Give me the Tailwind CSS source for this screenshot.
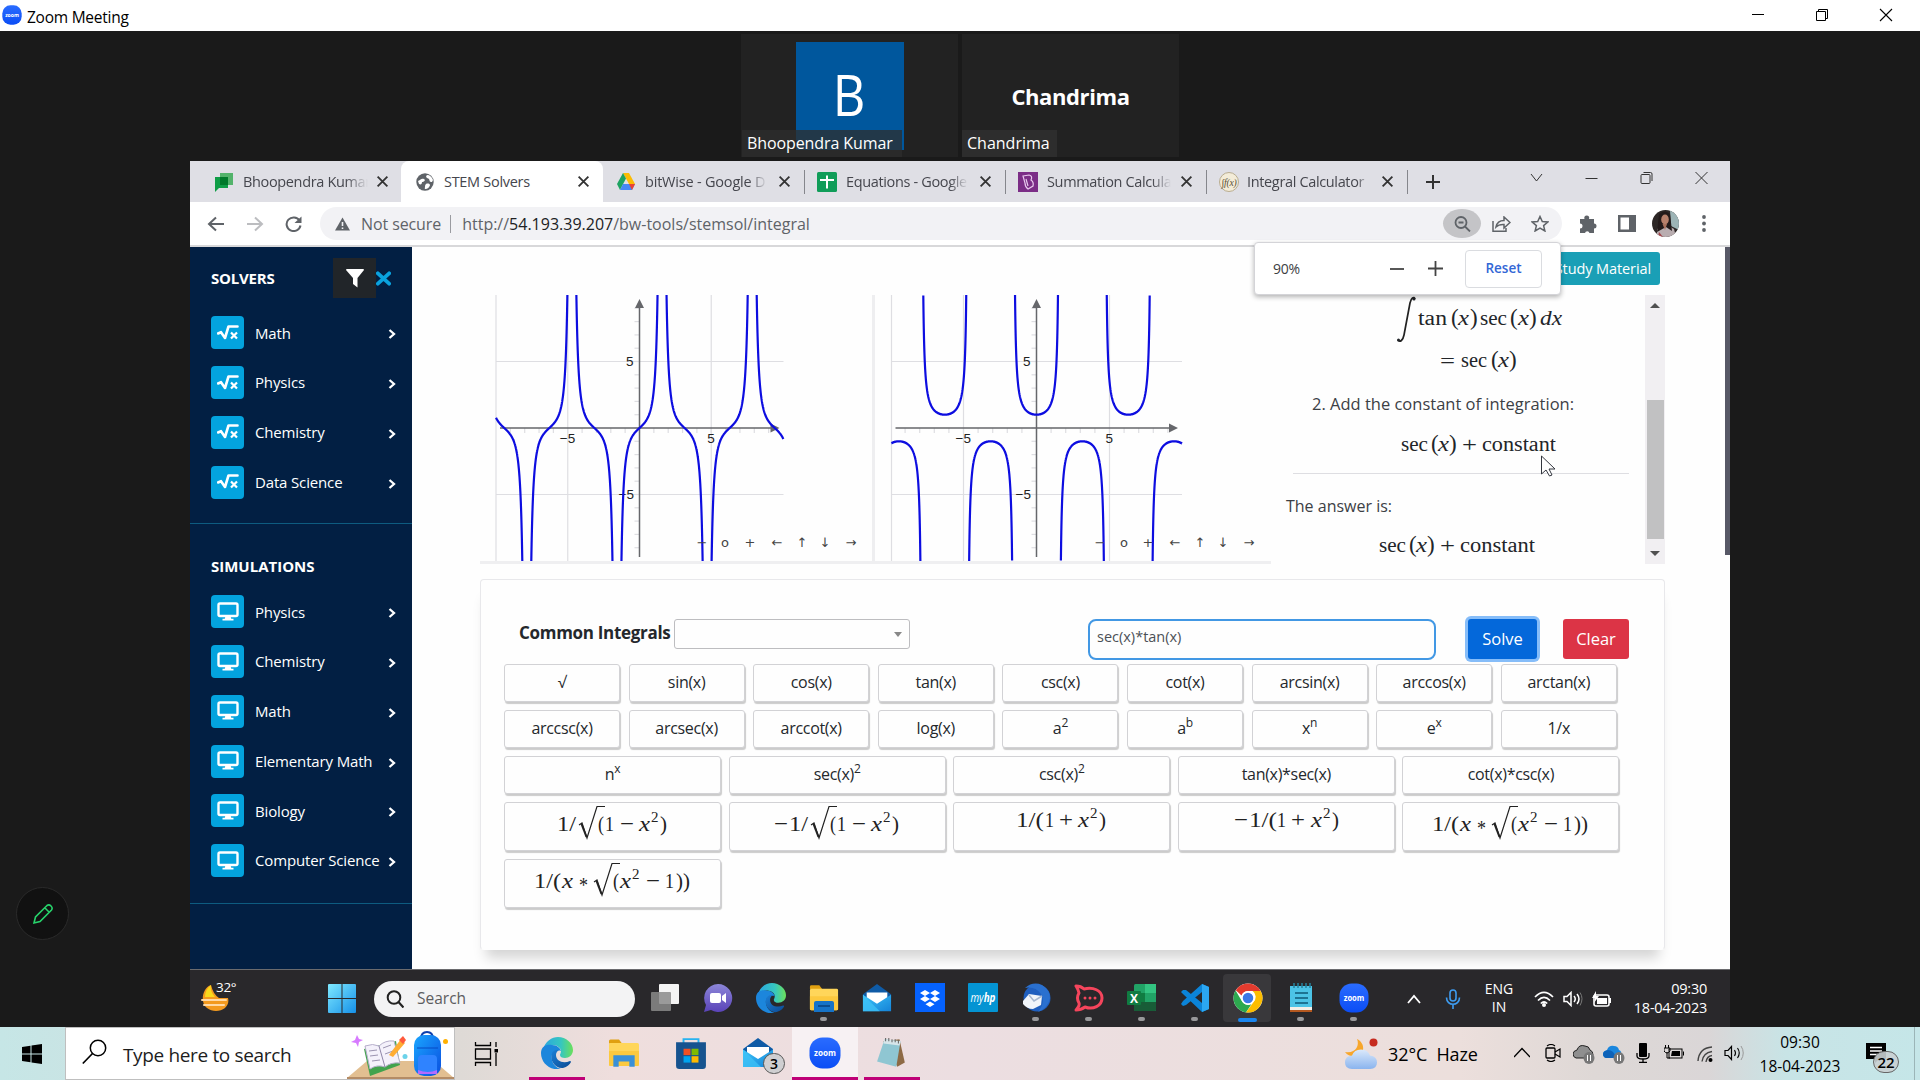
<!DOCTYPE html>
<html lang="en">
<head>
<meta charset="utf-8">
<title>Zoom Meeting</title>
<script src="https://cdn.jsdelivr.net/npm/@tailwindcss/browser@4"></script>
</head>
<body class="w-[1920px] h-[1080px] overflow-hidden bg-[#1a1a1a] flex flex-col font-['Open_Sans','Noto_Sans',sans-serif]">

<svg width="0" height="0" class="absolute">
  <defs>
    <linearGradient id="gz" x1="0" y1="0" x2="0" y2="1"><stop offset="0" stop-color="#2a6cff"/><stop offset="1" stop-color="#0b4df5"/></linearGradient>
    <linearGradient id="ge" x1="0" y1="0" x2="1" y2="0"><stop offset="0" stop-color="#2aa6e0"/><stop offset=".6" stop-color="#36c6c0"/><stop offset="1" stop-color="#6be05a"/></linearGradient>
    <linearGradient id="ge2" x1="0" y1="0" x2="1" y2="1"><stop offset="0" stop-color="#1b7fd6"/><stop offset="1" stop-color="#0c4a93"/></linearGradient>
    <linearGradient id="gm" x1="0" y1="0" x2="1" y2="1"><stop offset="0" stop-color="#3cc4f8"/><stop offset="1" stop-color="#1583d8"/></linearGradient>
    <linearGradient id="gw" x1="0" y1="0" x2="1" y2="1"><stop offset="0" stop-color="#7fe9ff"/><stop offset="1" stop-color="#1590e8"/></linearGradient>
    <linearGradient id="gc" x1="0" y1="0" x2="0" y2="1"><stop offset="0" stop-color="#dbe9fb"/><stop offset="1" stop-color="#8ab4ee"/></linearGradient>
    <linearGradient id="gb" x1="0" y1="0" x2="1" y2="1"><stop offset="0" stop-color="#1aa6ff"/><stop offset="1" stop-color="#0a4fe0"/></linearGradient>
    <linearGradient id="gch" x1="0" y1="0" x2="0" y2="1"><stop offset="0" stop-color="#8c86d8"/><stop offset="1" stop-color="#5a43b8"/></linearGradient>
  </defs>
  <symbol id="zoom" viewBox="0 0 32 32"><rect x=".5" y=".5" width="31" height="31" rx="13" fill="url(#gz)"/><text x="16" y="19" font-size="9.5" font-weight="700" text-anchor="middle" fill="#fff" textLength="22" lengthAdjust="spacingAndGlyphs" font-family="Open Sans">zoom</text></symbol>
  <symbol id="edge" viewBox="0 0 32 32"><path d="M2 13C4 4 11 0 17 0c8 0 15 6 15 13 0 5-4 8-8 8-3 0-5-1-5-3 0-1 1-2 1-4 0-3-4-6-8-6-5 0-9 2-10 5z" fill="url(#ge)"/><path d="M0 16C0 9 6 7 11 8c5 0 8 3 9 6-6-2-11 3-9 9 1 5 5 8 9 9C9 34 0 26 0 16z" fill="#1c86dc"/><path d="M11 16c-3 8 4 16 11 15 4-1 7-4 8-6 0-1-1-1-1-1-7 3-14 0-14-6 0-2 1-4 3-5-3-1-6 1-7 3z" fill="url(#ge2)"/></symbol>
  <symbol id="folder" viewBox="0 0 32 32"><path d="M1 4q0-1.500 1.500-1.500H11l3 4H1z" fill="#e0a010"/><rect x="1" y="6" width="30" height="23" rx="1.500" fill="#ffd65a"/><path d="M1 14h30v14q0 1-1.500 1h-27Q1 29 1 28z" fill="#fcc93f"/></symbol>
  <symbol id="mail" viewBox="0 0 32 32"><path d="M1 12 16 1l15 11v4H1z" fill="#0f5ba6"/><path d="M5 10h22v8l-11 7L5 18z" fill="#fff"/><path d="M1 12.500 16 22l15-9.500V30H1z" fill="url(#gm)"/><path d="M1 12.500 19 30H1z" fill="#3fc3f7" opacity=".75"/></symbol>
  <symbol id="x" viewBox="0 0 12 12"><path d="M1.500 1.500l9 9M10.500 1.500l-9 9" stroke="currentColor" fill="none" stroke-width="1.700"/></symbol>
  <symbol id="root" viewBox="0 0 22 18"><path d="M1 9.500 4 8.200 8 14 11.500 2.500H20.500" fill="none" stroke="#fff" stroke-width="2.600" stroke-linejoin="round" stroke-linecap="round"/><path d="M14 8.500l6 6M20 8.500l-6 6" stroke="#fff" stroke-width="2.200"/></symbol>
  <symbol id="monitor" viewBox="0 0 22 20"><rect x="1.500" y="1.500" width="19" height="12.500" rx="1.500" fill="none" stroke="#fff" stroke-width="2.400"/><path d="M8.500 14h5l.8 3H7.700zM5.500 16.700h11v1.800h-11z" fill="#fff"/></symbol>
  <symbol id="chev" viewBox="0 0 8 10"><path d="M1.500 1 6 5 1.500 9" fill="none" stroke="#fff" stroke-width="2.300"/></symbol>
</svg>

<!-- meeting window title bar -->
<header class="h-[31px] shrink-0 bg-white flex items-center">
  <svg class="w-5 h-5 ml-0.5 mb-0.5 shrink-0"><use href="#zoom"/></svg>
  <span class="ml-[5px] mt-0.5 text-[15.5px] text-black tracking-[-0.25px] leading-5">Zoom Meeting</span>
  <div class="ml-auto flex items-center text-black mb-px mr-px">
    <svg class="w-16" height="14" viewBox="0 0 64 14"><path d="M25 6.500h12" stroke="#000"/></svg>
    <svg class="w-16" height="14" viewBox="0 0 64 14"><path d="M25.500 3.500h9v9h-9zM27.500 3.500v-2h9v9h-2" stroke="#000" fill="none"/></svg>
    <svg class="w-16" height="14" viewBox="0 0 64 14"><path d="M25 1l12 12M37 1 25 13" stroke="#000" stroke-width="1.100"/></svg>
  </div>
</header>

<!-- participants -->
<section class="h-[130px] shrink-0 flex justify-center gap-1 pt-[3px] pb-1">
  <div class="w-[217px] h-[123px] bg-[#222] relative flex justify-center items-start">
    <div class="w-[108px] h-[108px] mt-2 bg-[#00579d] text-white text-[56px] font-medium flex items-center justify-center leading-none pb-1"><span class="scale-x-90">B</span></div>
    <div class="absolute left-px bottom-0 w-[160px] h-[27px] bg-[#2d2d2d]/75 text-white text-[16px] leading-[27px] pl-[5px] tracking-[-0.100px] whitespace-nowrap">Bhoopendra Kumar</div>
  </div>
  <div class="w-[217px] h-[123px] bg-[#222] relative flex justify-center items-center text-white">
    <span class="text-[22px] font-bold tracking-[-0.4px] leading-none">Chandrima</span>
    <div class="absolute left-0 bottom-0 w-[95px] h-[27px] bg-[#2d2d2d] text-[16px] leading-[27px] pl-[5px]">Chandrima</div>
  </div>
</section>

<!-- shared screen -->
<main class="w-[1540px] h-[866px] ml-[190px] shrink-0 flex flex-col bg-white relative">
  <!-- tab strip -->
  <div class="h-[41px] shrink-0 bg-[#dfdfe5] flex items-center text-[#45464d] text-[14px] tracking-[-0.250px]">
    <div class="w-[211px] h-full flex items-center pl-[25px] pr-3">
      <svg class="w-[18px] h-5 shrink-0" viewBox="0 0 18 20"><path d="M5 1h13v12H5z" fill="#53b36b"/><path d="M0 5h13v11H4l-4 4z" fill="#0f9d46"/><path d="M5 5h8v8H5z" fill="#00792a"/></svg>
      <span class="ml-[10px] w-[125px] text-[14.500px] tracking-[-0.350px] whitespace-nowrap [mask-image:linear-gradient(90deg,#000_82%,transparent)]">Bhoopendra Kumar</span>
      <svg class="w-[13px] h-[13px] ml-auto text-[#333]"><use href="#x"/></svg>
    </div>
    <div class="w-[202px] h-full flex items-center pl-[15px] pr-[13px] bg-white rounded-t-lg">
      <svg class="w-[18px] h-[18px] shrink-0" viewBox="0 0 18 18"><circle cx="9" cy="9" r="8.700" fill="#5f6368"/><path d="M2 8c3-1 3-3 6-2 2 1 0 3-2 3 0 2-1 3-3 2zM11 2c-2 2 0 3 2 4 1 2 0 3 3 3l1-2c-1-3-3-5-6-5zM10 11c2-1 4 0 4 1s-2 4-4 4-1-1-1-2 0-2 1-3z" fill="#fff"/></svg>
      <span class="ml-[10px] text-[14.500px] tracking-[-0.300px]">STEM Solvers</span>
      <svg class="w-[13px] h-[13px] ml-auto text-[#333]"><use href="#x"/></svg>
    </div>
    <div class="w-[201px] h-full flex items-center pl-[14px] pr-[13px]">
      <svg class="w-[18px] h-[17px] shrink-0" viewBox="0 0 18 17"><path d="M6 0h6l6 11h-6z" fill="#fbbc04"/><path d="M6 0 0 11l3 6L9 5.500z" fill="#1ea362"/><path d="M3 17h12l3-6H6z" fill="#4688f4"/><path d="M12 11h6l-3 6z" fill="#ea4335"/></svg>
      <span class="ml-[10px] w-[122px] text-[14.500px] tracking-[-0.200px] whitespace-nowrap overflow-hidden [mask-image:linear-gradient(90deg,#000_85%,transparent)]">bitWise - Google D</span>
      <svg class="w-[13px] h-[13px] ml-auto text-[#333]"><use href="#x"/></svg>
    </div>
    <div class="w-[201px] h-6 flex items-center pl-[12px] pr-[13px] border-l border-[#85868c]">
      <svg class="w-5 h-5 shrink-0" viewBox="0 0 20 20"><rect width="20" height="20" rx="1.500" fill="#109d59"/><path d="M10 3.500v13M3 8h14" stroke="#fff" stroke-width="2"/></svg>
      <span class="ml-[9px] w-[122px] text-[14.500px] tracking-[-0.350px] whitespace-nowrap [mask-image:linear-gradient(90deg,#000_85%,transparent)]">Equations - Google</span>
      <svg class="w-[13px] h-[13px] ml-auto text-[#333]"><use href="#x"/></svg>
    </div>
    <div class="w-[201px] h-6 flex items-center pl-[12px] pr-[13px] border-l border-[#85868c]">
      <svg class="w-5 h-5 shrink-0" viewBox="0 0 20 20"><rect width="20" height="20" fill="#7b2d86"/><path d="M5 4l6-1q4 1 2 5 3 2 2 6l-5 3q-3-2-3-6z M8 7l2 7" fill="none" stroke="#e9c9ee" stroke-width="1.200"/></svg>
      <span class="ml-[9px] w-[124px] text-[14.500px] tracking-[-0.350px] whitespace-nowrap [mask-image:linear-gradient(90deg,#000_85%,transparent)]">Summation Calcula</span>
      <svg class="w-[13px] h-[13px] ml-auto text-[#333]"><use href="#x"/></svg>
    </div>
    <div class="w-[202px] h-6 flex items-center pl-[12px] pr-[13px] border-x border-[#85868c]">
      <svg class="w-5 h-5 shrink-0" viewBox="0 0 20 20"><circle cx="10" cy="10" r="9.500" fill="#f3ecd8" stroke="#b9ad90"/><text x="10" y="13.500" font-size="10" font-style="italic" text-anchor="middle" fill="#5a4f35" textLength="15" lengthAdjust="spacingAndGlyphs" font-family="Liberation Serif">∫f(x)</text></svg>
      <span class="ml-[8px] w-[122px] text-[14.500px] tracking-[-0.350px] whitespace-nowrap [mask-image:linear-gradient(90deg,#000_90%,transparent)]">Integral Calculator</span>
      <svg class="w-[13px] h-[13px] ml-auto text-[#333]"><use href="#x"/></svg>
    </div>
    <svg class="w-4 h-4 ml-[17px] shrink-0" viewBox="0 0 16 16"><path d="M8 1v14M1 8h14" stroke="#333" stroke-width="2"/></svg>
    <div class="ml-auto mr-px flex items-center pb-[7px]">
      <svg class="w-[55px] h-3" viewBox="0 0 55 12"><path d="M22 2l5.500 7L33 2" stroke="#333" fill="none"/></svg>
      <svg class="w-[55px] h-3" viewBox="0 0 55 12"><path d="M21.500 6.500h12" stroke="#333"/></svg>
      <svg class="w-[55px] h-3" viewBox="0 0 55 12"><rect x="22" y="2.500" width="9" height="9" rx="1" stroke="#333" fill="none"/><path d="M24.500.5h7q1.500 0 1.500 1.500v7" stroke="#333" fill="none"/></svg>
      <svg class="w-[55px] h-3" viewBox="0 0 55 12"><path d="M21.500 0l12 12M33.500 0l-12 12" stroke="#333"/></svg>
    </div>
  </div>
  <!-- toolbar -->
  <div class="h-[45px] shrink-0 border-b-2 border-[#d8d8da] flex items-center pl-[7px] pr-[8px]">
    <svg class="w-[39px] h-4" viewBox="0 0 39 16"><path d="M27 8H12.500M19 1.500 12 8l7 6.500" stroke="#5f6368" stroke-width="2" fill="none"/></svg>
    <svg class="w-[38px] h-4" viewBox="0 0 38 16"><path d="M11 8h14.500M19 1.500 26 8l-7 6.500" stroke="#bcbdc0" stroke-width="2" fill="none"/></svg>
    <svg class="w-[40px] h-4" viewBox="0 0 40 16"><path d="M25.500 4.500A7 6.800 0 1 0 26.500 9.500" stroke="#5f6368" stroke-width="2" fill="none"/><path d="M27.500 .5v6.500h-7z" fill="#5f6368"/></svg>
    <div class="ml-[6px] w-[1242px] h-[33px] rounded-full bg-[#f2f2f5] flex items-center text-[#5f6368] text-[16px] shrink-0">
      <svg class="w-[15px] h-[14px] ml-[15px]" viewBox="0 0 15 14"><path d="M7.500.5 15 13.500H0z" fill="#5f6368"/><path d="M7.500 5v4M7.500 10.500v1.500" stroke="#f2f2f5" stroke-width="1.600"/></svg>
      <span class="ml-[11px] tracking-[-0.100px]">Not secure</span>
      <span class="ml-[9px] w-px h-[18px] bg-[#9a9ba0]"></span>
      <span class="ml-[11px]">http://<span class="text-[#202124]">54.193.39.207</span>/bw-tools/stemsol/integral</span>
      <div class="ml-auto mr-[5px] flex items-center">
        <div class="w-[38px] h-[29px] rounded-[50%] bg-[#c4c4c7] flex items-center justify-center"><svg class="w-[17px] h-4" viewBox="0 0 17 16"><circle cx="7" cy="6.500" r="5.500" fill="none" stroke="#5f6368" stroke-width="1.800"/><path d="M4.500 6.500h5M11 10.500l5 5" stroke="#5f6368" stroke-width="1.800"/></svg></div>
        <svg class="w-[19px] h-4 ml-[11px]" viewBox="0 0 19 16"><path d="M1 5v10.300h13V12M4 11C5 6 8 4.500 12 4.500V1l6 5.500-6 5.500V8.500C8 8.300 6 9 4 11z" fill="none" stroke="#5f6368" stroke-width="1.500"/></svg>
        <svg class="w-[18px] h-[17px] ml-[20px] mr-2" viewBox="0 0 18 17"><path d="M9 1.500l2.300 5 5.500.5-4.200 3.600 1.300 5.400L9 13.200 4.100 16l1.300-5.400L1.200 7l5.500-.5z" fill="none" stroke="#5f6368" stroke-width="1.500"/></svg>
      </div>
    </div>
    <svg class="w-[18px] h-[18px] ml-[17px]" viewBox="0 0 18 18"><path d="M1 4h4.500a2.500 2.500 0 1 1 4.500 0h5v4.500a2.500 2.500 0 1 1 0 5V18h-4.500a2.300 2.300 0 0 0-4.500 0H1v-4.500a2.500 2.500 0 0 0 0-5z" fill="#5f6368"/></svg>
    <svg class="w-[18px] h-[17px] ml-[21px]" viewBox="0 0 18 17"><path d="M0 0h18v17H0zM2.500 2.500v12H11v-12z" fill="#5f6368" fill-rule="evenodd"/></svg>
    <svg class="w-[27px] h-[27px] ml-[16px]" viewBox="0 0 27 27"><defs><clipPath id="av"><circle cx="13.500" cy="13.500" r="13.500"/></clipPath></defs><g clip-path="url(#av)"><path d="M0 0h27v27H0z" fill="#2d2726"/><path d="M18 0h9v20l-8-4z" fill="#9db4b6"/><path d="M5 27V19l6-3h6l5 3 2 8z" fill="#b9adb0"/><path d="M7 4q6-5 11 0l2 17-6-4-9 5z" fill="#231a1a"/><ellipse cx="13" cy="9.500" rx="3.800" ry="5" fill="#b7806b"/><path d="M10.500 14h4.500l-2 6z" fill="#a8705c"/><path d="M7 22l4 5H6z" fill="#a3474d"/></g></svg>
    <svg class="w-1 h-[17px] ml-[23px]" viewBox="0 0 4 17"><circle cx="2" cy="2" r="1.900" fill="#5f6368"/><circle cx="2" cy="8.500" r="1.900" fill="#5f6368"/><circle cx="2" cy="15" r="1.900" fill="#5f6368"/></svg>
  </div>

  <!-- zoom level bubble -->
  <div class="absolute z-10 left-[1064px] top-[81px] w-[307px] h-[53px] bg-white rounded border border-[#d4d4d8] shadow-[0_2px_5px_rgba(0,0,0,0.3)] flex items-center pl-[18px] text-[#3c4043]">
    <span class="text-[14px] tracking-[-0.300px]">90%</span>
    <svg class="w-[14px] h-4 ml-auto" viewBox="0 0 14 16"><path d="M0 8h14" stroke="#444" stroke-width="1.800"/></svg>
    <svg class="w-[15px] h-[15px] ml-6" viewBox="0 0 15 15"><path d="M0 7.500h15M7.500 0v15" stroke="#444" stroke-width="1.800"/></svg>
    <div class="ml-[22px] mr-[18px] w-[77px] h-[38px] border border-[#dadce0] rounded flex items-center justify-center text-[#3367d6] font-semibold text-[13.500px]">Reset</div>
  </div>

  <!-- page -->
  <div class="h-[722px] shrink-0 flex overflow-hidden bg-[#fefefe]">
    <aside class="w-[222px] h-full bg-[#021f43] text-white flex flex-col shrink-0">
      <div class="h-[277px] border-b border-[#0d5b80] pl-[21px]">
        <div class="flex items-center h-[39px] pt-[12px] box-content -mt-3 pb-0">
        </div>
        <div class="flex items-center h-10 -mt-[28px]">
          <span class="text-[15px] font-bold w-[122px] tracking-[-0.200px]">SOLVERS</span>
          <div class="w-[43px] h-10 bg-[#212529] flex items-center justify-center"><svg class="w-[18px] h-[19px]" viewBox="0 0 18 19"><path d="M0 1q0-1 1-1h16q1 0 1 1l-6.500 8v9.500L7 15V9z" fill="#fff"/></svg></div>
          <svg class="w-[15px] h-[15px]" viewBox="0 0 16 15"><path d="M2 2l12 11M14 2 2 13" stroke="#0aa2de" stroke-width="4" stroke-linecap="round"/></svg>
        </div>
        <nav id="solvers" class="mt-[18px] flex flex-col"></nav>
      </div>
      <div class="h-[380px] border-b border-[#0d5b80] pl-[21px]">
        <h2 class="text-[15px] font-bold mt-[32px] h-[20px] leading-5">SIMULATIONS</h2>
        <nav id="sims" class="mt-[19px] flex flex-col"></nav>
      </div>
    </aside>

    <div class="w-[1313px] shrink-0 flex flex-col">
      <div class="h-12 shrink-0 flex justify-end items-start pt-[5px] pr-[65px]">
        <div class="w-[122px] h-[33px] bg-[#1a9fb6] rounded-[3px] text-white text-[14.500px] leading-[33px] text-right pr-[9px] tracking-[-0.1px] whitespace-nowrap">Study Material</div>
      </div>
      <div class="flex h-[269px] shrink-0 pl-[68px]">
        <div class="w-[791px] h-[269px] border-b-[3px] border-[#efeff1] flex">
          <svg id="g1" class="w-[392px] h-[266px] shrink-0" viewBox="0 0 392 266"></svg>
          <div class="w-[3px] h-full bg-[#eeeef0]"></div>
          <svg id="g2" class="w-[395px] h-[266px] shrink-0" viewBox="0 0 395 266"></svg>
        </div>
        <!-- worked solution -->
        <svg class="w-[374px] h-[269px] shrink-0" viewBox="1271 295 374 269" fill="#222529" font-family="Liberation Serif,serif" font-size="20">
          <path d="M1398 340c2 3 5 0 6-5l6-32c1-5 4-7 5-4" fill="none" stroke="#222" stroke-width="1.700"/><circle cx="1398.500" cy="340" r="1.500"/><circle cx="1414" cy="299" r="1.500"/>
          <text x="1418" y="325" textLength="29" lengthAdjust="spacingAndGlyphs">tan</text><text x="1451" y="325" font-size="23">(</text><text x="1458" y="325" font-style="italic" textLength="11" lengthAdjust="spacingAndGlyphs">x</text><text x="1470" y="325" font-size="23">)</text>
          <text x="1480" y="325" textLength="27" lengthAdjust="spacingAndGlyphs">sec</text><text x="1510" y="325" font-size="23">(</text><text x="1518" y="325" font-style="italic" textLength="11" lengthAdjust="spacingAndGlyphs">x</text><text x="1529" y="325" font-size="23">)</text><text x="1540" y="325" font-style="italic" textLength="22" lengthAdjust="spacingAndGlyphs">dx</text>
          <text x="1440" y="368" textLength="15" lengthAdjust="spacingAndGlyphs">=</text><text x="1461" y="367" textLength="26" lengthAdjust="spacingAndGlyphs">sec</text><text x="1491" y="367" font-size="23">(</text><text x="1498" y="367" font-style="italic" textLength="11" lengthAdjust="spacingAndGlyphs">x</text><text x="1509" y="367" font-size="23">)</text>
          <text x="1312" y="409.500" font-family="Open Sans,sans-serif" font-size="16.500" fill="#3c4045" textLength="262" lengthAdjust="spacingAndGlyphs">2. Add the constant of integration:</text>
          <text x="1401" y="450.500" textLength="27" lengthAdjust="spacingAndGlyphs">sec</text><text x="1431" y="450.500" font-size="23">(</text><text x="1438" y="450.500" font-style="italic" textLength="11" lengthAdjust="spacingAndGlyphs">x</text><text x="1449" y="450.500" font-size="23">)</text><text x="1462" y="451.500" textLength="15" lengthAdjust="spacingAndGlyphs">+</text><text x="1482" y="450.500" textLength="74" lengthAdjust="spacingAndGlyphs">constant</text>
          <path d="M1293 473.500h336" stroke="#dedee2"/>
          <text x="1286" y="511.500" font-family="Open Sans,sans-serif" font-size="16.500" fill="#3c4045" textLength="106" lengthAdjust="spacingAndGlyphs">The answer is:</text>
          <text x="1379" y="551.500" textLength="27" lengthAdjust="spacingAndGlyphs">sec</text><text x="1409" y="551.500" font-size="23">(</text><text x="1416" y="551.500" font-style="italic" textLength="11" lengthAdjust="spacingAndGlyphs">x</text><text x="1427" y="551.500" font-size="23">)</text><text x="1440" y="552.500" textLength="15" lengthAdjust="spacingAndGlyphs">+</text><text x="1460" y="551.500" textLength="75" lengthAdjust="spacingAndGlyphs">constant</text>
          <path d="M1541.500 456v18l4.500-4 3.500 6 2.500-1-3-6h6z" fill="#fff" stroke="#33363f" stroke-width="1"/>
        </svg>
        <div class="w-5 h-full bg-[#f1eff2] flex flex-col items-center">
          <svg class="w-[10px] h-[5px] mt-[8px]" viewBox="0 0 10 5"><path d="M0 5 5 0l5 5z" fill="#505050"/></svg>
          <div class="w-[17px] h-[139px] mt-[92px] bg-[#c1c1c2]"></div>
          <svg class="w-[10px] h-[5px] mt-[12px]" viewBox="0 0 10 5"><path d="M0 0l5 5 5-5z" fill="#505050"/></svg>
        </div>
      </div>
      <!-- calculator card -->
      <div class="ml-[68px] mt-[15px] w-[1185px] h-[371px] shrink-0 border border-[#e8e8eb] border-b-transparent rounded shadow-[0_14px_12px_-6px_rgba(0,0,0,0.17)] bg-[#fefefe] pl-[23px] pt-[39px] flex flex-col text-[#24282c]">
        <div class="flex h-[45px] items-start">
          <span class="ml-[15px] w-[155px] text-[17px] font-bold leading-7 whitespace-nowrap tracking-[-0.300px]">Common Integrals</span>
          <div class="w-[236px] h-[30px] border border-[#bdbdc0] rounded-[3px] flex items-center justify-end pr-[7px]"><svg class="w-2 h-[5px]" viewBox="0 0 8 5"><path d="M0 0h8L4 5z" fill="#888"/></svg></div>
          <div class="ml-[178px] w-[348px] h-[41px] border-2 border-[#4298e4] rounded-lg text-[14.500px] text-[#4b5056] pl-[7px] leading-[31px]">sec(x)*tan(x)</div>
          <div class="ml-[32px] w-[69px] h-10 bg-[#0468da] rounded-[3px] ring-[3px] ring-[#86bdf9] text-white text-[16.500px] flex items-center justify-center pt-px">Solve</div>
          <div class="ml-[26px] w-[66px] h-10 bg-[#dc3446] rounded-[3px] text-white text-[16.500px] flex items-center justify-center pt-px">Clear</div>
        </div>
        <div id="keys9" class="grid grid-cols-[repeat(9,116px)] gap-x-[8.600px] gap-y-2 auto-rows-[38px]"></div>
        <div id="keys5" class="mt-2 grid grid-cols-[repeat(5,217px)] gap-x-[7.600px] gap-y-2 grid-rows-[38px_49px_49px]"></div>
      </div>
    </div>
    <div class="w-[5px] h-[308px] bg-[#575866]"></div>
  </div>

  <!-- shared screen taskbar -->
  <div class="h-[58px] shrink-0 bg-[#29282b] border-t border-[#6b6b6e] flex items-center">
    <div class="w-[138px] shrink-0 pl-[11px] relative">
      <svg class="w-9 h-8" viewBox="0 0 36 32"><path d="M10 2C1 5-1 20 6 25c5 4 13 4 18 0 3-3 4-6 3-10H18q-6-4-8-13z" fill="#f39a1f"/><path d="M10 2C6 5 4 9 4 14h10c-3-4-5-7-4-12z" fill="#f8d91c"/><path d="M1 17h24M3 22h20" stroke="#ffd9a5" stroke-width="2" stroke-linecap="round"/></svg>
      <span class="absolute left-[26px] top-[-4px] text-[13.500px] text-white leading-4 tracking-tight">32°</span>
    </div>
    <svg class="w-[28px] h-[29px] shrink-0" viewBox="0 0 28 29"><path d="M0 1q0-1 1-1h12.500v14H0zM14.500 0H27q1 0 1 1v13H14.500zM0 15h13.500v14H1q-1 0-1-1zM14.500 15H28v13q0 1-1 1H14.500z" fill="url(#gw)"/></svg>
    <div class="ml-[18px] w-[261px] h-9 rounded-full bg-[#f3f3f4] shrink-0 flex items-center text-[15.500px] text-[#5d5d60]">
      <svg class="w-[18px] h-[18px] ml-[12px]" viewBox="0 0 18 18"><circle cx="8" cy="7.500" r="6.300" fill="none" stroke="#222" stroke-width="2"/><path d="M12.500 12l5 5.500" stroke="#222" stroke-width="2.200"/></svg>
      <span class="ml-[13px]">Search</span>
    </div>
    <div id="dock" class="flex ml-[3px] h-full"></div>
    <div class="ml-auto mr-[23px] flex items-center text-white">
      <svg class="w-[14px] h-3" viewBox="0 0 14 12"><path d="M1 10l6-7 6 7" stroke="#fff" stroke-width="1.800" fill="none"/></svg>
      <svg class="w-4 h-5 ml-[24px]" viewBox="0 0 16 20"><rect x="5" y="1" width="6" height="11" rx="3" fill="none" stroke="#3e9cf0" stroke-width="1.600"/><path d="M1.500 8.500c0 9 13 9 13 0M8 15.500V20" stroke="#3e9cf0" stroke-width="1.600" fill="none"/></svg>
      <div class="w-[40px] ml-[18px] text-center text-[14px] leading-[18px] pb-px">ENG<br>IN</div>
      <svg class="w-5 h-4 ml-[15px]" viewBox="0 0 20 16"><path d="M1 6q9-9 18 0M4 9.500q6-6 12 0M6.800 12.500q3.200-3 6.400 0" stroke="#fff" stroke-width="1.700" fill="none"/><circle cx="10" cy="14" r="2" fill="#fff"/></svg>
      <svg class="w-5 h-4 ml-[9px]" viewBox="0 0 20 16"><path d="M1 5.500h3l4-4v13l-4-4H1z" fill="none" stroke="#fff" stroke-width="1.500"/><path d="M11 5q2.500 3 0 6M14 3q4 5 0 10" stroke="#fff" stroke-width="1.500" fill="none"/><path d="M17 1.500q4 6 0 13" stroke="#777" fill="none"/></svg>
      <svg class="w-5 h-4 ml-[9px]" viewBox="0 0 20 16"><rect x="2" y="4" width="15" height="11" rx="2" fill="none" stroke="#fff" stroke-width="1.600"/><rect x="5" y="7" width="10" height="6" fill="#fff"/><path d="M18 7v5" stroke="#fff" stroke-width="2"/><path d="M4 0 0 7h3l-1 5 5-7H4z" fill="#fff"/></svg>
      <div class="ml-auto w-[95px] text-right text-[14.500px] leading-[19px] tracking-[-0.250px] pb-px">09:30<br>18-04-2023</div>
    </div>
  </div>
</main>

<!-- annotation button -->
<div class="absolute left-[16px] top-[887px] w-[53px] h-[53px] rounded-full bg-[#111] border border-[#2a2a2a] flex items-center justify-center">
  <svg class="w-[22px] h-[22px]" viewBox="0 0 22 22"><path d="M2 20l1.500-6L15 2.500q2-1.500 4 .5t.500 4L8 18.500z M13 5l4.500 4.500" fill="none" stroke="#27d36b" stroke-width="1.600"/></svg>
</div>

<!-- host taskbar -->
<footer class="h-[53px] shrink-0 flex items-center bg-[linear-gradient(90deg,#c6e6e6_0%,#c9e4e4_4%,#dedad6_24%,#efdedd_32%,#ecdee1_50%,#ecdfdc_76%,#ded8d6_83%,#dad6d7_89%,#c8e4e6_93%,#c5e6e8_100%)] text-black relative">
  <div class="w-[65px] flex justify-center shrink-0"><svg class="w-5 h-5 mr-px" viewBox="0 0 20 20"><path d="M0 3l8.500-1.200v7.700H0zM9.500 1.600 20 0v9.500H9.500zM0 10.500h8.500v7.700L0 17zM9.500 10.500H20V20L9.500 18.400z"/></svg></div>
  <div class="w-[390px] h-[53px] bg-white border border-[#bfbfbf] flex items-center shrink-0">
    <svg class="w-[26px] h-[26px] ml-4 mb-1" viewBox="0 0 26 26"><circle cx="16" cy="9" r="7.700" fill="none" stroke="#000" stroke-width="1.500"/><path d="M10.500 14.500.8 24.500" stroke="#000" stroke-width="1.700"/></svg>
    <span class="ml-[15px] text-[19px] text-[#1d1d1d] pt-[3px] tracking-[-0.350px] whitespace-nowrap">Type here to search</span>
    <svg class="w-[107px] h-[51px] ml-auto shrink-0" viewBox="348 1028 107 51">
      <path d="M348 1078l20-17h67l20 17z" fill="#e2bf91"/><path d="M348 1077h107v2H348z" fill="#b48c66"/>
      <path d="M358 1035l2 4 4 1-4 2-1 5-2-4-5-1 4-2z" fill="#d77aff"/><circle cx="446.500" cy="1041.500" r="2.500" fill="#ffb000"/><circle cx="406" cy="1056.500" r="2.500" fill="#6cd3ea"/>
      <path d="M365 1049l32-8 4 24-30 11z" fill="#41a34d"/><path d="M366 1046q8-3 14 0 6-6 15-5l6 22q-9-1-15 4-8-3-15 2z" fill="#f4f1fb" stroke="#b6aecb"/><path d="M380 1046l6 21" stroke="#8f86a8"/><path d="M370 1051l8-1M371 1056l8-1M373 1061l8-1M384 1048l8-3M386 1054l8-3" stroke="#9b93b0"/>
      <path d="M390 1055l12-16 4 4-12 14z" fill="#ffad33"/><path d="M400 1040l4-4 3 4-3 4z" fill="#ff5a3c"/>
      <path d="M422 1039q0-7 6-7t6 7" fill="none" stroke="#0c3fae" stroke-width="2"/><rect x="415" y="1035" width="27" height="41" rx="10" fill="url(#gb)"/><path d="M419 1059q0-4 4-4h11q4 0 4 4v14h-19z" fill="#2f83ff"/><path d="M419 1070q10 4 19 0v4h-19z" fill="#b26bff"/><path d="M418 1048h21" stroke="#064bc4"/>
    </svg>
  </div>
  <div class="w-[62px] flex justify-center shrink-0"><svg class="w-[26px] h-6" viewBox="0 0 26 24"><path d="M2.500 0v3.500h15V0M2.500 24v-3.500h15V24M2.500 7h15v10h-15zM23 0v5M23 11v13" fill="none" stroke="#000" stroke-width="1.300"/><path d="M21.500 7h3.500v3.500h-3.500z"/></svg></div>
  <div id="host" class="flex h-full ml-[6px]"></div>
  <div class="ml-auto flex items-center h-full">
    <svg class="w-[36px] h-8" viewBox="0 0 36 32"><path d="M13 1c3 7-2 15-12 13 5 7 16 5 18-2 1-5-2-9-6-11z" fill="#f7a62b"/><path d="M8 31q-7 0-7-6.500t7-7q2-6 9-6t9 6q7 1 7 7T26 31z" fill="url(#gc)"/><circle cx="29.500" cy="4.500" r="4" fill="#c62b1f"/></svg>
    <span class="ml-[8px] w-[95px] text-[18px] whitespace-pre tracking-[-0.100px] pt-px">32°C  Haze</span>
    <svg class="w-4 h-3 mb-1 ml-[31px]" viewBox="0 0 16 12"><path d="M0 11l8-8.500 8 8.500" stroke="#000" fill="none" stroke-width="1.300"/></svg>
    <svg class="w-4 h-[18px] mb-0.5 ml-[15px]" viewBox="0 0 16 18"><rect x="1" y="4" width="9" height="10" rx="1" fill="none" stroke="#000" stroke-width="1.300"/><path d="M10 8l5-3v8l-5-3M2 2q4-3 8 0M2 16q4 3 8 0" fill="none" stroke="#000" stroke-width="1.200"/></svg>
    <svg class="w-[22px] h-5 ml-[12px]" viewBox="0 0 22 20"><path d="M3 14q-3-1-3-4t4-4q2-6 8-4 4 0 5 4 3 1 3 5l-4 3z" fill="#8f8f8f" stroke="#222"/><ellipse cx="16" cy="14" rx="5.500" ry="6" fill="#777"/><path d="M14.500 11v6M17.500 11v6" stroke="#fff"/></svg>
    <svg class="w-[22px] h-5 ml-[8px]" viewBox="0 0 22 20"><path d="M3 14q-3-1-3-4t4-4q2-5 7-4 4 0 5 4 3 1 2 5l-4 3z" fill="#1a86dd"/><path d="M3 14q-3-1-3-4t5-4q6 0 8 8z" fill="#0d62b8"/><ellipse cx="16" cy="14" rx="5.500" ry="6" fill="#777"/><path d="M14.500 11v6M17.500 11v6" stroke="#fff"/></svg>
    <svg class="w-[14px] h-5 mb-0.5 ml-[11px]" viewBox="0 0 14 20"><rect x="3" y="0" width="8" height="14" rx="1"/><path d="M1 10v3q0 3 6 3t6-3v-3M7 16v3M3 19.500h8" stroke="#000" fill="none" stroke-width="1.300"/></svg>
    <svg class="w-5 h-4 mb-0.5 ml-[14px]" viewBox="0 0 20 16"><rect x="5" y="4" width="13" height="9" fill="none" stroke="#000"/><path d="M8 6h8v5H7zM19 6.500h1v4h-1z"/><path d="M0 3h6v3q-3 4-6 0zM1.500 0v3M4.500 0v3M3 7v6h3" stroke="#000" fill="none"/></svg>
    <svg class="w-4 h-[18px] ml-[13px]" viewBox="0 0 16 18"><path d="M1 16Q2 3 15 2M5 16.500Q6 8 15 6.500M9 17q1-6 6-6.500" fill="none" stroke="#444" stroke-width="1.400"/><circle cx="13.500" cy="15" r="2"/></svg>
    <svg class="w-5 h-4 mb-0.5 ml-[11px]" viewBox="0 0 20 16"><path d="M1 5.500h3l3.500-4v13l-3.500-4H1z" fill="none" stroke="#000" stroke-width="1.200"/><path d="M10.500 5q2 3 0 6M13.500 3q3.500 5 0 10" stroke="#000" stroke-width="1.100" fill="none"/><path d="M17 1q4.500 7 0 14" stroke="#999" fill="none"/></svg>
    <div class="ml-[12px] w-[88px] text-center text-[15.500px] leading-[24px] whitespace-nowrap">09:30<br>18-04-2023</div>
    <div class="ml-[22px] w-[49px] h-full relative border-r border-[#9bb5b7] mr-[5px]">
      <svg class="w-5 h-5 absolute left-0 top-4" viewBox="0 0 20 20"><path d="M0 0h20v16h-7l-4 4v-4H0z"/><path d="M4 4.500h12M4 8h12M4 11.500h8" stroke="#fff" stroke-width="1.300"/></svg>
      <div class="absolute left-[7px] top-[24px] w-[26px] h-[22px] rounded-[11px] bg-[#c9cfd1]/90 border border-[#666] text-[15px] font-semibold leading-[20px] text-center">22</div>
    </div>
  </div>
</footer>

<script>
// sidebar entries
const entry = (icon, label) => `<div class="h-[49.750px] flex items-center pr-[16px] pb-4 text-[15px]">
  <span class="w-[33px] h-[33px] rounded bg-[#03a3de] flex items-center justify-center shrink-0"><svg class="w-[22px] h-[20px]"><use href="#${icon}"/></svg></span>
  <span class="ml-[11px] tracking-[-0.150px] whitespace-nowrap">${label}</span><svg class="w-[8px] h-[10px] ml-auto mt-[3px] shrink-0"><use href="#chev"/></svg></div>`;
solvers.innerHTML = ['Math','Physics','Chemistry','Data Science'].map(t => entry('root', t)).join('');
sims.innerHTML = ['Physics','Chemistry','Math','Elementary Math','Biology','Computer Science'].map(t => entry('monitor', t)).join('');

// function plots
function plot(id, o) {
  const cy = 133, uy = 13.3;
  let s = `<g stroke="#dedee2" stroke-width="1.200">`;
  for (const gx of [o.l, o.cx - 5*o.u, o.cx + 5*o.u]) s += `<path d="M${gx} 0V266"/>`;
  for (const gy of [cy - 5*uy, cy + 5*uy]) s += `<path d="M${o.l} ${gy}H${o.r}"/>`;
  for (let i = -9; i <= 9; i++) {
    s += `<path d="M${o.cx-5} ${cy+i*uy}h5"/>`;
    s += `<path d="M${o.cx+i*o.u} ${cy}v5"/>`;
  }
  s += `</g><path d="M${o.l+4} ${cy}H${o.r-10}M${o.cx} 262V12" stroke="#66676b" stroke-width="1.500"/>
  <path d="M${o.r-13} ${cy-4.5}l9 4.500-9 4.500zM${o.cx-4.5} 13l4.500-9 4.500 9z" fill="#66676b"/>`;
  let d = '', pen = false;
  for (let px = o.l; px <= o.r; px += .1) {
    const v = o.f((px - o.cx) / o.u);
    if (Math.abs(v) > 10.5) { pen = false; continue; }
    d += (pen ? 'L' : 'M') + px.toFixed(1) + ' ' + (cy - v*uy).toFixed(1); pen = true;
  }
  s += `<g font-family="Liberation Sans,sans-serif" font-size="13.500" fill="#222"><text x="${o.cx-13.5}" y="71">5</text><text x="${o.cx-21}" y="204">−5</text><text x="${o.cx-5*o.u-8}" y="148">−5</text><text x="${o.cx+5*o.u-4}" y="148">5</text></g>`;
  s += `<path d="${d}" fill="none" stroke="#0d0de0" stroke-width="2.200"/><g font-family="DejaVu Sans,sans-serif" font-size="13" fill="#444" text-anchor="middle">`;
  '−o+←↑↓→'.split('').forEach((c, i) => s += `<text x="${o.t[i]}" y="252">${c}</text>`);
  document.getElementById(id).innerHTML = s + '</g>';
}
plot('g1', {l:16, r:303.5, cx:159.5, u:14.35, f:x => Math.sin(x)/Math.cos(x)**2, t:[222,245,270,297,322,345,371]});
plot('g2', {l:16.5, r:307, cx:161.500, u:14.6, f:x => 1/Math.cos(x), t:[225,249,273,300,325,348,374]});

// calculator keys
const key = 'border border-[#d2d2d5] rounded-[3px] shadow-[1px_2px_1px_rgba(0,0,0,0.2)] bg-[#fefefe] flex items-center justify-center text-[16px] tracking-[-0.300px] pb-0.5';
const sup = (a, b) => `<span>${a}<sup class="text-[12px] -top-[7px]">${b}</sup></span>`;
keys9.innerHTML = ['√','sin(x)','cos(x)','tan(x)','csc(x)','cot(x)','arcsin(x)','arccos(x)','arctan(x)','arccsc(x)','arcsec(x)','arccot(x)','log(x)',sup('a','2'),sup('a','b'),sup('x','n'),sup('e','x'),'1/x'].map(k => `<div class="${key}">${k}</div>`).join('');
const T = (x, w, t, it) => `<text x="${x}" y="28" textLength="${w}" lengthAdjust="spacingAndGlyphs" ${it ? 'font-style="italic"' : ''}>${t}</text>`;
const A = x => `<text x="${x}" y="32" textLength="9" lengthAdjust="spacingAndGlyphs" font-size="21">*</text>`;
const S = x => `<text x="${x}" y="19" font-size="15">2</text>`;
const R = x => `<path d="M${x} 22l3-2 5 15L${x+18} 3.500h8" fill="none" stroke="#222" stroke-width="1.200"/><path d="M${x+2.500} 21l5 13" stroke="#222" stroke-width="2"/>`;
const M = (w, dy, b) => `<svg width="${w}" height="47" viewBox="0 0 ${w} 47" font-family="Liberation Serif,serif" font-size="22" fill="#222"><g transform="translate(0 ${dy})">${b}</g></svg>`;
const f1 = M(111, 0, T(0,19,'1/') + R(22) + T(41,6,'(') + T(48,9,'1') + T(63,14,'−') + T(82,11,'x',1) + S(94) + T(103,7,')'));
const f2 = M(126, 0, T(0,14,'−') + T(15,19,'1/') + R(37) + T(56,6,'(') + T(63,9,'1') + T(78,14,'−') + T(97,11,'x',1) + S(109) + T(118,7,')'));
const f3 = M(91, -4.5, T(0,28,'1/(') + T(29,9,'1') + T(43,14,'+') + T(62,11,'x',1) + S(74) + T(83,7,')'));
const f4 = M(105, -4.5, T(0,14,'−') + T(15,28,'1/(') + T(43,9,'1') + T(57,14,'+') + T(77,11,'x',1) + S(89) + T(98,7,')'));
const f5 = M(157, 0, T(0,27,'1/(') + T(28,11,'x',1) + A(45) + R(60) + T(79,6,'(') + T(86,11,'x',1) + S(98) + T(112,14,'−') + T(131,9,'1') + T(142,14,'))'));
keys5.innerHTML = [sup('n','x'),sup('sec(x)','2'),sup('csc(x)','2'),'tan(x)*sec(x)','cot(x)*csc(x)'].map(k => `<div class="${key}">${k}</div>`).join('')
  + [f1,f2,f3,f4,f5,f5].map(k => `<div class="border border-[#d2d2d5] rounded-[3px] shadow-[1px_2px_1px_rgba(0,0,0,0.2)] bg-[#fefefe] flex items-start justify-center overflow-hidden">${k}</div>`).join('');

// shared-screen dock: [icon body, running]
const use = n => `<use href="#${n}" width="30" height="30"/>`;
const dockItems = [
 ['<rect x="9" y="1" width="20" height="20" rx="1" fill="#f4f4f4"/><rect x="1" y="9" width="20" height="19" rx="1" fill="#8a8a8a" opacity=".85"/>',0],
 ['<path d="M15 1a14 14 0 1 1-7 26L1 29l2-7A14 14 0 0 1 15 1z" fill="url(#gch)"/><rect x="7" y="10" width="11" height="10" rx="2" fill="#fff"/><path d="M19 13l4-3v10l-4-3z" fill="#fff"/>',0],
 [use('edge'),0],
 [use('folder') + '<path d="M5 20q0-2 2-2h16q2 0 2 2v9H5z" fill="#1673c7"/><path d="M9 23h12" stroke="#0b4d8f" stroke-width="2"/>',1],
 [use('mail'),0],
 ['<rect width="30" height="29" fill="#0562fe"/><path d="M10 7l5 3-5 3-5-3zM20 7l5 3-5 3-5-3zM10 13l5 3-5 3-5-3zM20 13l5 3-5 3-5-3zM15 18.500l4.500 2.700L15 24l-4.500-2.800z" fill="#fff"/>',0],
 ['<rect width="30" height="29" rx="1" fill="#0494d3"/><text x="15" y="19" font-size="12.500" font-style="italic" font-family="Open Sans" fill="#fff" text-anchor="middle" textLength="25" lengthAdjust="spacingAndGlyphs">my<tspan font-weight="700">hp</tspan></text>',0],
 ['<circle cx="16" cy="15" r="13.500" fill="#1f5fbf"/><path d="M4 5q8-7 17-3 8 5 8 13-2 10-12 14 8-10 3-18Q14 3 4 5z" fill="#2a70cf"/><path d="M2 18l6-7 13 2-1 9-8 4q-6 0-10-5z" fill="#f1f5fa"/><path d="M8 12l5 6 8-5" fill="none" stroke="#a6b7cf" stroke-width="1.500"/>',1],
 ['<path d="M2 3q5 0 8 3c9-2 18 1 18 9s-9 12-17 9q-4 3-9 3 4-4 3-7-3-5 0-10-1-4-3-7z" fill="none" stroke="#f5455c" stroke-width="3" stroke-linejoin="round"/><circle cx="11" cy="15" r="1.500" fill="#f5455c"/><circle cx="16" cy="15" r="1.500" fill="#f5455c"/><circle cx="21" cy="15" r="1.500" fill="#f5455c"/>',1],
 ['<rect x="7" y="1" width="22" height="27" rx="1.500" fill="#21a366"/><path d="M18 1h11v9H18z" fill="#33c481"/><path d="M7 10h11v9H7z" fill="#107c41"/><path d="M7 19h22v8q0 1-1 1H7z" fill="#185c37"/><rect x="0" y="8" width="14" height="14" rx="1" fill="#107c41"/><text x="7" y="19.500" font-size="12" font-weight="700" font-family="Open Sans" fill="#fff" text-anchor="middle">X</text>',1],
 ['<path d="M22 1 29 4v22l-7 3L3 11 1 9l2-2 3 0L22 20V9L6 22l-3 1-2-2 2-3z" fill="#0b84d8"/><path d="M22 1l7 3v22l-7 3z" fill="#2ba7f2"/>',1],
 ['<circle cx="15" cy="15" r="14.500" fill="#fff"/><path d="M15 .5A14.500 14.500 0 0 1 27.600 8H15a7 7 0 0 0-6.500 4.500L2.800 7.200A14.500 14.500 0 0 1 15 .5z" fill="#e33b2e"/><path d="M2.600 7.500A14.500 14.500 0 0 0 13 29.400l5.500-8.500A7 7 0 0 1 8.500 17.500z" fill="#2da94f"/><path d="M27.600 8A14.500 14.500 0 0 1 13 29.400l7.500-10.500A7 7 0 0 0 19.500 8z" fill="#fdbd00"/><circle cx="15" cy="15" r="6" fill="#3b78e7" stroke="#fff" stroke-width="1.500"/>',2],
 ['<path d="M4 3h22v25H4z" fill="#4cc3e6"/><path d="M4 24h22v3H4z" fill="#f3efe8"/><path d="M4 27h22v2H4z" fill="#b4581f"/><path d="M8 0v5M12 0v5M16 0v5M20 0v5M24 0v5" stroke="#24839f" stroke-width="1.500"/><path d="M9 10h13M9 15h13M9 20h13" stroke="#0e5a78" stroke-width="1.600"/>',1],
 [use('zoom'),1]];
dock.innerHTML = dockItems.map(([b, r]) => `<div class="w-[53px] h-full relative flex justify-center pt-[13px]">
  ${r === 2 ? '<span class="absolute left-[2px] top-1 w-12 h-12 rounded bg-[#39383b]"></span>' : ''}
  <svg class="w-[30px] h-[30px] relative" viewBox="0 0 30 30">${b}</svg>
  ${r === 2 ? '<span class="absolute bottom-[5px] w-[19px] h-1 rounded bg-[#1a86ef]"></span>' : r ? '<span class="absolute bottom-[6px] w-[7px] h-1 rounded bg-[#98989a]"></span>' : ''}</div>`).join('');

// host taskbar apps: [icon body, running]
const hostItems = [
 [use('edge'),1],
 [use('folder') + '<path d="M5 28V17h20v11h-5v-5H10v5z" fill="#3a90d8"/>',0],
 ['<path d="M8 6V2h14v4" fill="none" stroke="#27b3f0" stroke-width="1.800"/><path d="M1 5h28v22q0 3-3 3H4q-3 0-3-3z" fill="#16538f"/><path d="M8 11h6.500v6H8z" fill="#f25022"/><path d="M15.500 11H22v6h-6.500z" fill="#7fba00"/><path d="M8 18h6.500v6H8z" fill="#00a4ef"/><path d="M15.500 18H22v6h-6.500z" fill="#ffb900"/>',0],
 [use('mail'),0],
 [use('zoom'),2],
 ['<path d="M7 4l15-2 5 22-7 4z" fill="#8d6a45"/><path d="M8 2l15 2-4 24L1 23z" fill="#8fc6d2"/><path d="M8 2l15 2-1 4L7 6z" fill="#d7e6ea"/><path d="M9 1v3M12 1v3M15 2v3M18 2v3M21 3v3" stroke="#666"/>',1]];
host.innerHTML = hostItems.map(([b, r], i) => `<div class="w-[67px] h-full relative flex items-center justify-center">
  ${r === 2 ? '<span class="absolute inset-y-0 left-[1px] w-[66px] bg-[#f7f1f3]"></span>' : ''}
  <svg class="w-8 h-8 relative mb-0.5" viewBox="0 0 30 30">${b}</svg>
  ${i === 3 ? '<span class="absolute left-[39px] top-[26px] w-[22px] h-[21px] rounded-full bg-[#cfcfd1] border border-[#555] text-[14px] leading-[19px] font-semibold text-center">3</span>' : ''}
  ${r === 2 ? '<span class="absolute bottom-0 left-[1px] w-[66px] h-[3px] bg-[#bf0077]"></span>' : r ? '<span class="absolute bottom-0 w-14 h-[3px] bg-[#bf0077]"></span>' : ''}</div>`).join('');
</script>
</body>
</html>
